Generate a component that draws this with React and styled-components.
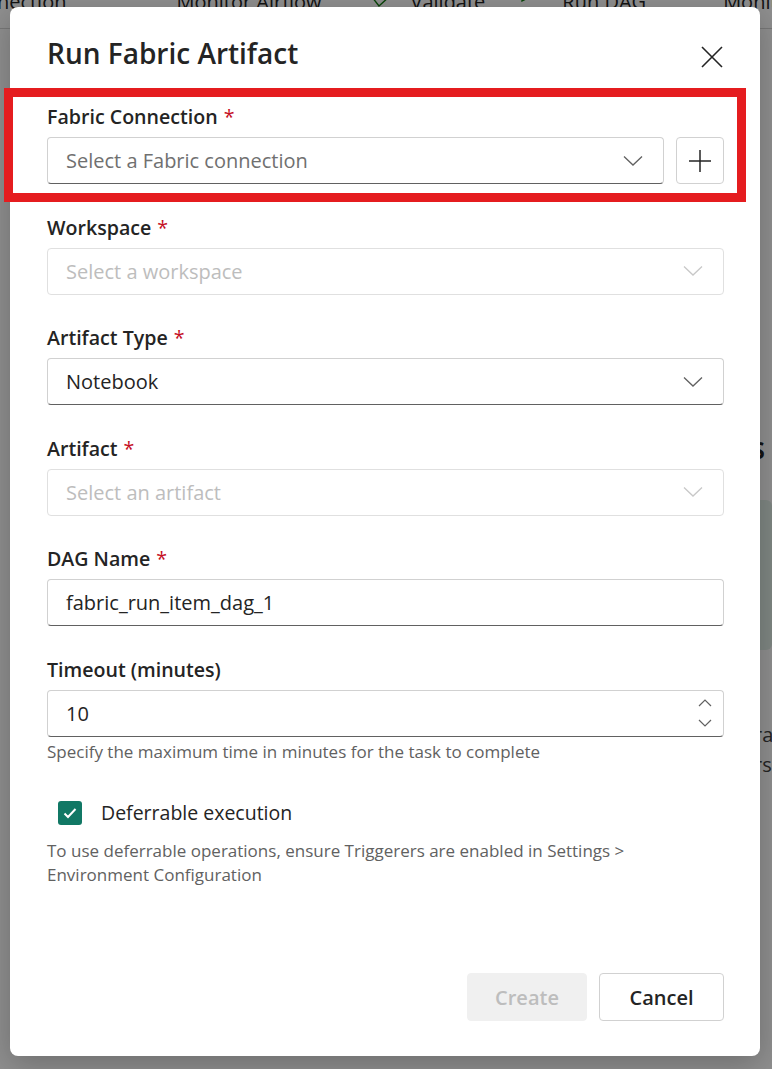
import React from "react";
import styled, { createGlobalStyle } from "styled-components";

const Global = createGlobalStyle`
  html, body { margin: 0; padding: 0; }
  body {
    font-family: "Open Sans", "Noto Sans", sans-serif;
    color: #242424;
    background: #ffffff;
    overflow: hidden;
  }
  * { box-sizing: border-box; }
`;

const Page = styled.div`
  position: relative;
  width: 772px;
  height: 1069px;
  overflow: hidden;
  background: #ffffff;
`;

const Toolbar = styled.div`
  height: 29px;
  border-bottom: 1px solid #d6d6d6;
  display: flex;
  align-items: flex-start;
  overflow: hidden;
  white-space: nowrap;
`;

const ToolItem = styled.div`
  display: flex;
  align-items: center;
  gap: 20px;
  font-size: 20px;
  line-height: 28px;
  color: #242424;
  margin-top: -12px;
  margin-left: ${(p) => p.$ml || 0}px;
`;

const ToolSep = styled.div`
  width: 1px;
  height: 18px;
  background: #9e9e9e;
  margin-left: ${(p) => p.$ml || 0}px;
`;

const Main = styled.div`
  display: flex;
  justify-content: flex-end;
`;

const SidePanel = styled.div`
  width: 220px;
  padding-top: 399px;
  display: flex;
  flex-direction: column;
  white-space: nowrap;
  overflow: hidden;
`;

const SideHeading = styled.div`
  font-size: 30px;
  font-weight: 600;
  text-align: right;
  padding-right: 7px;
  line-height: 40px;
`;

const SideCard = styled.div`
  margin-top: 32px;
  height: 150px;
  background: #e3f0ea;
  border-radius: 6px;
`;

const SideText = styled.div`
  font-size: 20px;
  line-height: 30px;
  color: #424242;
  padding-left: 202px;
  margin-top: ${(p) => p.$mt || 0}px;
`;

const Overlay = styled.div`
  position: absolute;
  inset: 0;
  background: rgba(0, 0, 0, 0.44);
  padding: 7px 12px 0 10px;
`;

const Dialog = styled.div`
  width: 750px;
  height: 1049px;
  background: #ffffff;
  border-radius: 8px;
  box-shadow: 0 8px 32px rgba(0, 0, 0, 0.24);
  padding: 26px 36px 35px 37px;
  display: flex;
  flex-direction: column;
`;

const Header = styled.div`
  display: flex;
  align-items: center;
  justify-content: space-between;
  margin-bottom: 30px;
`;

const Title = styled.h2`
  margin: 0;
  font-size: 28px;
  font-weight: 600;
  line-height: 38px;
  color: #242424;
`;

const CloseButton = styled.button`
  border: none;
  background: transparent;
  width: 32px;
  height: 32px;
  padding: 0;
  margin-right: -4px;
  margin-top: 8px;
  display: flex;
  align-items: center;
  justify-content: center;
  color: #242424;
  cursor: pointer;
`;

const Fields = styled.div`
  display: flex;
  flex-direction: column;
  gap: 29.5px;
`;

const Field = styled.div`
  display: flex;
  flex-direction: column;
  gap: 6px;
`;

const Label = styled.label`
  font-size: 19.6px;
  font-weight: 600;
  line-height: 28px;
  color: #242424;
`;

const Star = styled.span`
  color: #c50f1f;
  font-weight: 400;
  margin-left: 6px;
`;

const Row = styled.div`
  display: flex;
  gap: 12px;
`;

const Control = styled.div`
  flex: 1 1 auto;
  height: 47px;
  border-radius: 4px;
  border: 1px solid ${(p) => (p.$disabled ? "#e0e0e0" : "#d1d1d1")};
  border-bottom-color: ${(p) => (p.$disabled ? "#e0e0e0" : "#616161")};
  display: flex;
  align-items: center;
  justify-content: space-between;
  padding: 0 20px 0 18px;
  font-size: 20px;
  color: ${(p) =>
    p.$disabled ? "#bdbdbd" : p.$placeholder ? "#707070" : "#242424"};
  background: #ffffff;
`;

const Chevron = styled.svg`
  width: 20px;
  height: 12px;
  color: ${(p) => (p.$disabled ? "#c8c8c8" : "#616161")};
`;

const Spin = styled.div`
  display: flex;
  flex-direction: column;
  gap: 12px;
  margin-right: -9px;
  color: #616161;
`;

const AddButton = styled.button`
  width: 48px;
  height: 47px;
  flex-shrink: 0;
  border-radius: 4px;
  border: 1px solid #d1d1d1;
  background: #ffffff;
  display: flex;
  align-items: center;
  justify-content: center;
  color: #242424;
  padding: 0;
`;

const Hint = styled.div`
  font-size: 17px;
  line-height: 24px;
  color: #616161;
  margin-top: ${(p) => p.$mt || 0}px;
`;

const CheckRow = styled.div`
  display: flex;
  align-items: center;
  gap: 19px;
  padding-left: 11px;
  margin-top: 33px;
  height: 32px;
`;

const CheckBox = styled.span`
  width: 24px;
  height: 24px;
  border-radius: 3px;
  background: #117865;
  display: flex;
  align-items: center;
  justify-content: center;
`;

const CheckLabel = styled.span`
  font-size: 19.5px;
  color: #242424;
`;

const Footer = styled.div`
  margin-top: auto;
  display: flex;
  justify-content: flex-end;
  gap: 12px;
`;

const Button = styled.button`
  height: 48px;
  min-width: ${(p) => p.$w}px;
  border-radius: 4px;
  font-family: inherit;
  font-size: 20px;
  font-weight: 600;
  border: 1px solid ${(p) => (p.$disabled ? "#f0f0f0" : "#d1d1d1")};
  background: ${(p) => (p.$disabled ? "#f0f0f0" : "#ffffff")};
  color: ${(p) => (p.$disabled ? "#bdbdbd" : "#242424")};
`;

const Highlight = styled.div`
  position: absolute;
  left: 4px;
  top: 88px;
  width: 742px;
  height: 114px;
  border: 9px solid #e51c1f;
  pointer-events: none;
`;

const ChevronDown = ({ disabled }) => (
  <Chevron $disabled={disabled} viewBox="0 0 20 12" fill="none">
    <path d="M1 1.5 L10 10 L19 1.5" stroke="currentColor" strokeWidth="1.3" />
  </Chevron>
);

const Select = ({ text, placeholder, disabled }) => (
  <Control $placeholder={placeholder} $disabled={disabled}>
    <span>{text}</span>
    <ChevronDown disabled={disabled} />
  </Control>
);

export default function App() {
  return (
    <Page>
      <Global />
      <Toolbar>
        <ToolItem $ml={-40}>Connection</ToolItem>
        <ToolSep $ml={68} />
        <ToolSep $ml={23} />
        <ToolItem $ml={19}>Monitor Airflow</ToolItem>
        <ToolSep $ml={25} />
        <ToolItem $ml={24}>
          <svg width="20" height="14" viewBox="0 0 20 14">
            <path d="M1 2 L8 11 L19 1" stroke="#107c10" strokeWidth="1.4" fill="none" />
          </svg>
          Validate
        </ToolItem>
        <ToolItem $ml={36}>
          <svg width="14" height="14" viewBox="0 0 14 14">
            <path d="M1 1 L13 7 L1 13 Z" stroke="#107c10" strokeWidth="1.3" fill="none" />
          </svg>
        </ToolItem>
        <ToolItem $ml={27}>Run DAG</ToolItem>
        <ToolSep $ml={33} />
        <ToolSep $ml={26} />
        <ToolItem $ml={18}>Monitor</ToolItem>
      </Toolbar>
      <Main>
        <SidePanel>
          <SideHeading>Recent runs</SideHeading>
          <SideCard />
          <SideText $mt={70}>rate limits</SideText>
          <SideText>rs</SideText>
        </SidePanel>
      </Main>

      <Overlay>
        <Dialog>
          <Header>
            <Title>Run Fabric Artifact</Title>
            <CloseButton aria-label="Close">
              <svg width="24" height="24" viewBox="0 0 24 24" fill="none">
                <path d="M2 2 L22 22 M22 2 L2 22" stroke="currentColor" strokeWidth="1.6" />
              </svg>
            </CloseButton>
          </Header>

          <Fields>
            <Field>
              <Label>
                Fabric Connection<Star>*</Star>
              </Label>
              <Row>
                <Select text="Select a Fabric connection" placeholder />
                <AddButton aria-label="Add">
                  <svg width="24" height="24" viewBox="0 0 24 24" fill="none">
                    <path d="M12 1 V23 M1 12 H23" stroke="currentColor" strokeWidth="1.5" />
                  </svg>
                </AddButton>
              </Row>
            </Field>

            <Field>
              <Label>
                Workspace<Star>*</Star>
              </Label>
              <Select text="Select a workspace" disabled />
            </Field>

            <Field>
              <Label>
                Artifact Type<Star>*</Star>
              </Label>
              <Select text="Notebook" />
            </Field>

            <Field>
              <Label>
                Artifact<Star>*</Star>
              </Label>
              <Select text="Select an artifact" disabled />
            </Field>

            <Field>
              <Label>
                DAG Name<Star>*</Star>
              </Label>
              <Control>
                <span>fabric_run_item_dag_1</span>
              </Control>
            </Field>

            <Field>
              <Label>Timeout (minutes)</Label>
              <div>
                <Control>
                  <span>10</span>
                  <Spin>
                    <svg width="14" height="8" viewBox="0 0 14 8" fill="none">
                      <path d="M1 7 L7 1 L13 7" stroke="currentColor" strokeWidth="1.2" />
                    </svg>
                    <svg width="14" height="8" viewBox="0 0 14 8" fill="none">
                      <path d="M1 1 L7 7 L13 1" stroke="currentColor" strokeWidth="1.2" />
                    </svg>
                  </Spin>
                </Control>
                <Hint $mt={3}>
                  Specify the maximum time in minutes for the task to complete
                </Hint>
              </div>
            </Field>
          </Fields>

          <CheckRow>
            <CheckBox>
              <svg width="14" height="12" viewBox="0 0 14 12" fill="none">
                <path d="M1.5 6.5 L5 10 L12.5 2" stroke="#ffffff" strokeWidth="2" />
              </svg>
            </CheckBox>
            <CheckLabel>Deferrable execution</CheckLabel>
          </CheckRow>
          <Hint $mt={10}>
            To use deferrable operations, ensure Triggerers are enabled in Settings &gt;
            <br />
            Environment Configuration
          </Hint>

          <Footer>
            <Button $disabled $w={120}>Create</Button>
            <Button $w={125}>Cancel</Button>
          </Footer>
        </Dialog>
      </Overlay>
      <Highlight />
    </Page>
  );
}
